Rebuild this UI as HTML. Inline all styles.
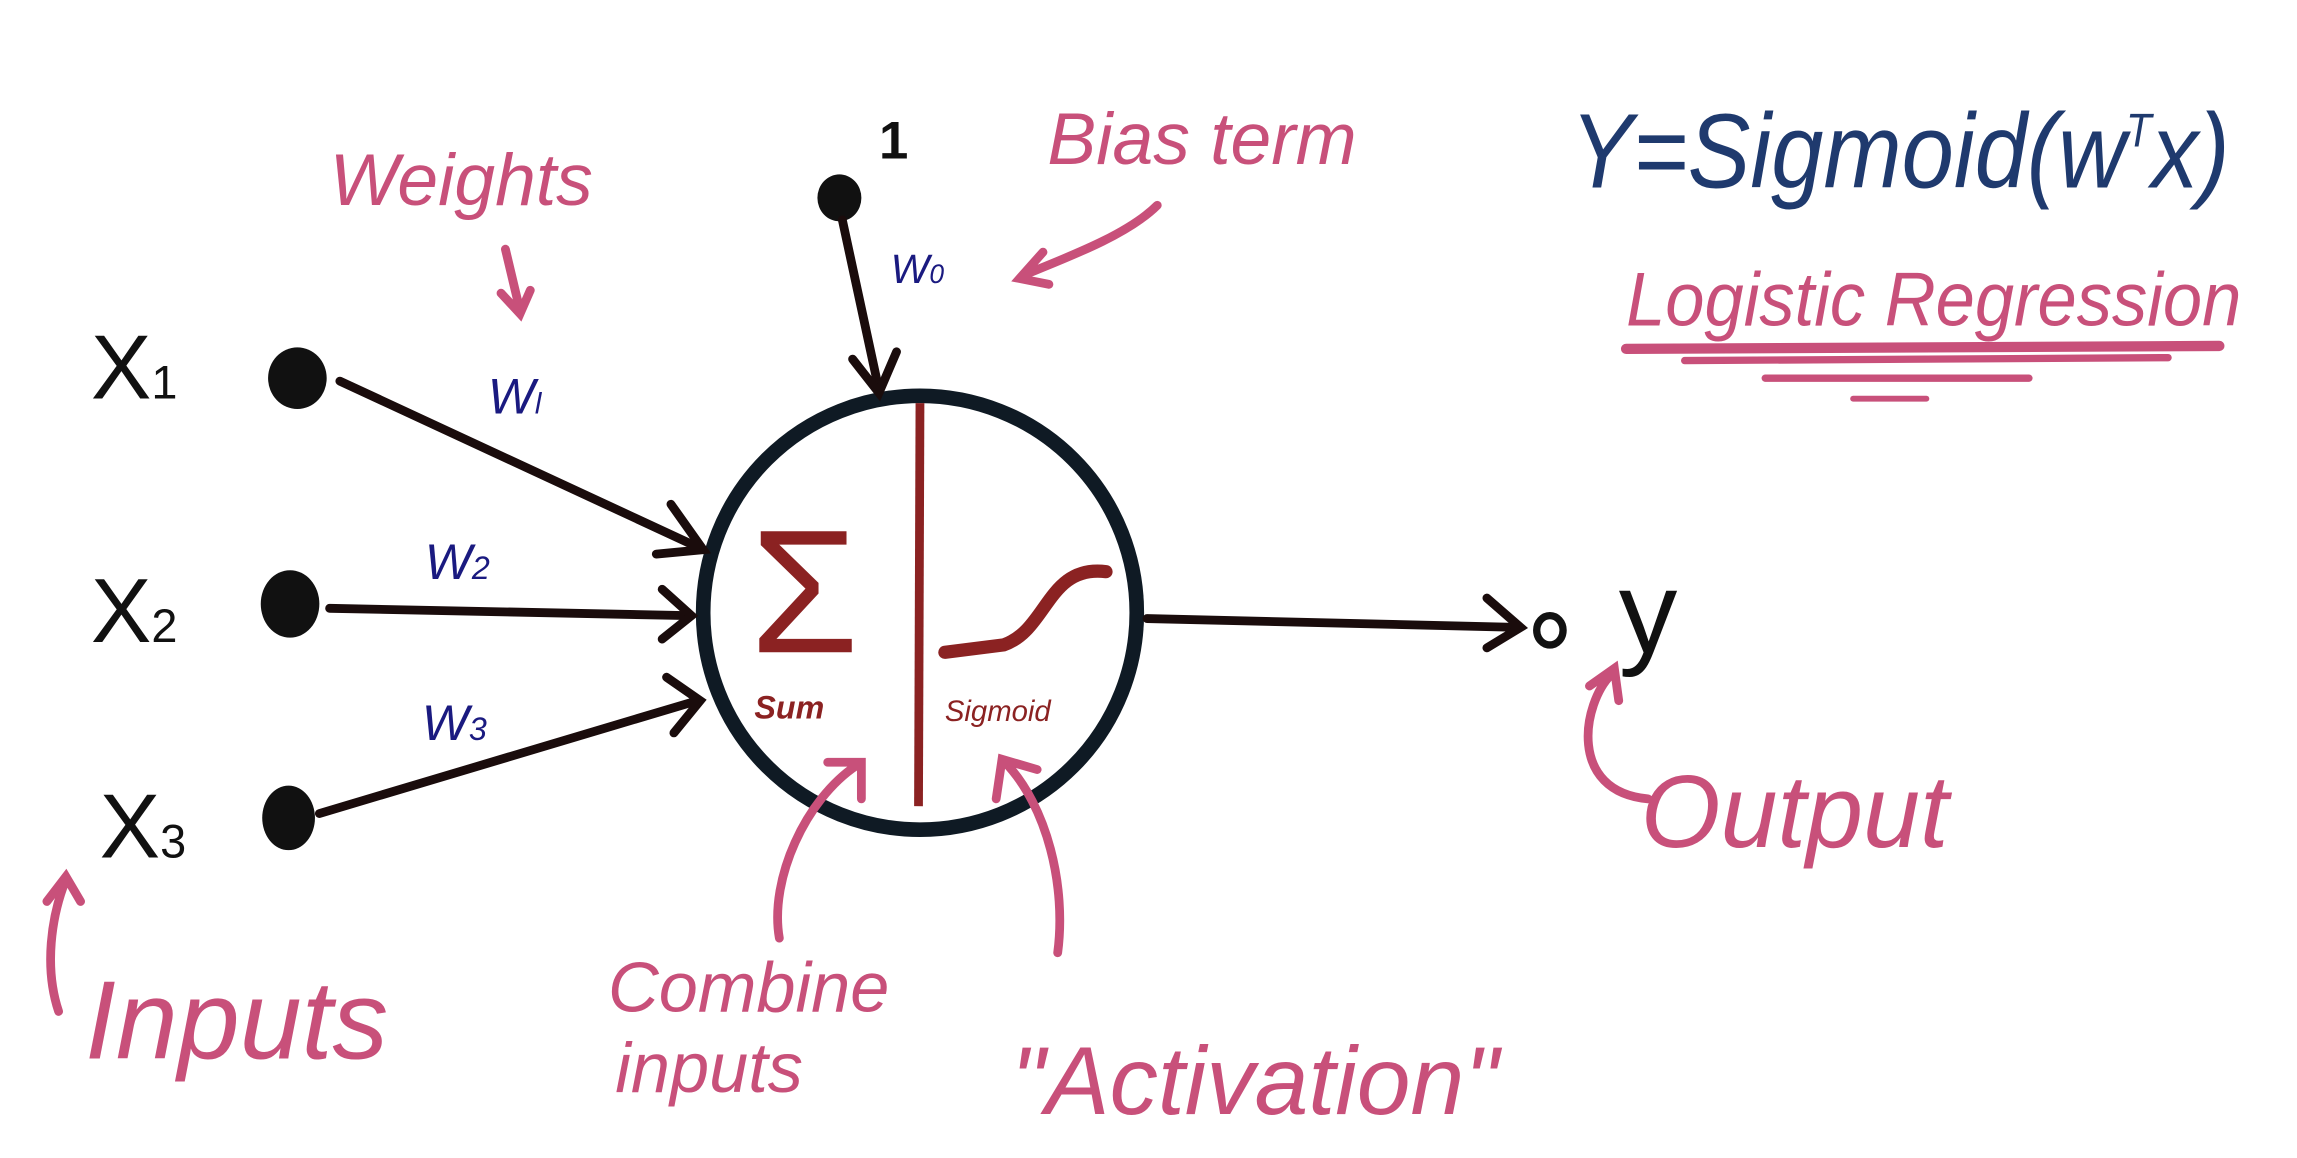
<!DOCTYPE html>
<html><head><meta charset="utf-8"><style>
html,body{margin:0;padding:0;background:#fff;width:2297px;height:1158px;overflow:hidden}
svg{display:block}
text{font-family:"Liberation Sans",sans-serif}
</style></head><body>
<svg width="2297" height="1158" viewBox="0 0 1568 790" preserveAspectRatio="none" xmlns="http://www.w3.org/2000/svg">
<rect width="1568" height="790" fill="#fff"/>
<circle cx="628" cy="418" r="148" fill="none" stroke="#0f1a24" stroke-width="10"/>
<line x1="628" y1="275" x2="627" y2="550" stroke="#8b2222" stroke-width="6"/>
<text x="512" y="445" font-size="120" fill="#8b2222">Σ</text>
<path d="M645 445 L685 440 C715 430 715 385 755 390" fill="none" stroke="#8b2222" stroke-width="9" stroke-linecap="round"/>
<text x="515" y="490" font-size="22" fill="#8b2222" font-weight="bold" font-style="italic">Sum</text>
<text x="645" y="492" font-size="20" fill="#8b2222" font-style="italic">Sigmoid</text>
<g fill="#111"><ellipse cx="203" cy="258" rx="20" ry="21"/><ellipse cx="198" cy="412" rx="20" ry="23"/><ellipse cx="197" cy="558" rx="18" ry="22"/><ellipse cx="573" cy="135" rx="15" ry="16"/></g>
<g stroke="#1a0c0c" stroke-width="6" fill="none" stroke-linecap="round">
<line x1="232" y1="260" x2="478" y2="374"/><path d="M458 344 L480 375 L448 378"/>
<line x1="225" y1="415" x2="470" y2="420"/><path d="M452 402 L472 420 L452 436"/>
<line x1="218" y1="555" x2="476" y2="478"/><path d="M455 462 L478 478 L460 500"/>
<line x1="575" y1="150" x2="600" y2="266"/><path d="M582 245 L600 268 L612 240"/>
<line x1="783" y1="422" x2="1036" y2="428"/><path d="M1015 408 L1038 428 L1015 442"/>
</g>
<ellipse cx="1058" cy="430" rx="9" ry="10" fill="none" stroke="#111" stroke-width="5"/>
<text x="1105" y="445" font-size="80" fill="#111">y</text>
<text x="600" y="108" font-size="36" fill="#111" font-weight="bold">1</text>
<text x="62" y="272" font-size="62" fill="#111">X<tspan font-size="32">1</tspan></text>
<text x="62" y="438" font-size="62" fill="#111">X<tspan font-size="32">2</tspan></text>
<text x="68" y="585" font-size="62" fill="#111">X<tspan font-size="32">3</tspan></text>
<g fill="#1a1a80" font-style="italic" font-size="34">
<text x="333" y="282">W<tspan font-size="20">l</tspan></text>
<text x="290" y="395">W<tspan font-size="22">2</tspan></text>
<text x="288" y="505">W<tspan font-size="22">3</tspan></text>
<text x="608" y="193" font-size="28">W<tspan font-size="18">0</tspan></text>
</g>
<g fill="#c8507a" font-style="italic">
<text x="225" y="140" font-size="50">Weights</text>
<text x="715" y="112" font-size="50">Bias term</text>
<text x="58" y="722" font-size="76">Inputs</text>
<text x="415" y="690" font-size="48">Combine</text>
<text x="420" y="745" font-size="48">inputs</text>
<text x="690" y="760" font-size="66">"Activation"</text>
<text x="1120" y="578" font-size="70">Output</text>
<text x="1110" y="222" font-size="52" textLength="420" lengthAdjust="spacingAndGlyphs">Logistic Regression</text>
</g>
<g stroke="#c8507a" stroke-width="6" fill="none" stroke-linecap="round">
<path d="M345 170 L355 212 M342 200 L355 214 L362 198"/>
<path d="M790 140 C770 160 730 175 698 188 M712 172 L696 190 L716 194"/>
<path d="M532 640 C525 600 550 545 585 522 M565 520 L588 520 L588 545"/>
<path d="M722 650 C728 605 715 550 686 520 M680 545 L684 518 L708 525"/>
<path d="M40 690 C30 660 35 625 45 600 M32 615 L45 598 L55 615"/>
<path d="M1125 545 C1070 540 1080 480 1100 460 M1085 468 L1102 456 L1105 478"/>
<path d="M1110 238 L1515 236" stroke-width="7"/>
<path d="M1150 246 L1480 244" stroke-width="5"/>
<path d="M1205 258 L1385 258" stroke-width="5"/>
<path d="M1265 272 L1315 272" stroke-width="4"/>
</g>
<text x="1072" y="128" font-size="72" fill="#1f3a6e" font-style="italic" textLength="450" lengthAdjust="spacingAndGlyphs">Y=Sigmoid(w<tspan font-size="32" dy="-28">T</tspan><tspan dy="28">x)</tspan></text>
</svg>
</body></html>
